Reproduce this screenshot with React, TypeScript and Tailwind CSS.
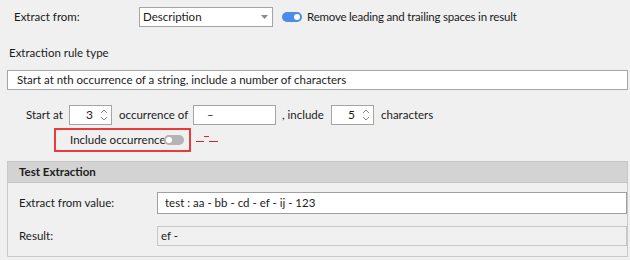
import React from 'react';

function Spin({ value }: { value: string }) {
  return (
    <div className="flex items-center shrink-0 h-[20px] w-[43px] border border-[#a5a5a5] bg-white">
      <span className="flex-1 text-right pr-[7px] text-[12px]">{value}</span>
      <svg width="8" height="14" viewBox="0 0 8 14" className="mr-[3px]">
        <path d="M1 5 L4 2 L7 5" fill="none" stroke="#8a8a8a" strokeWidth="1" />
        <path d="M1 9 L4 12 L7 9" fill="none" stroke="#8a8a8a" strokeWidth="1" />
      </svg>
    </div>
  );
}

function Toggle({ on }: { on: boolean }) {
  return (
    <div
      className={`relative shrink-0 w-[20px] h-[10px] rounded-full ${on ? 'bg-[#4d8ce6]' : 'bg-[#b4b4b4]'}`}
    >
      <div
        className={`absolute top-[2px] w-[6px] h-[6px] rounded-full bg-white ${on ? 'right-[2px]' : 'left-[2px]'}`}
      />
    </div>
  );
}

export default function App() {
  return (
    <div
      className="w-[630px] h-[260px] bg-[#f0f0f0] overflow-hidden text-[11.5px] text-[#1b1b1b] leading-[16px] whitespace-nowrap"
      style={{ fontFamily: 'Lato, "Liberation Sans", sans-serif' }}
    >
      <div className="flex items-center h-[20px] mt-[7px] pl-[14px]">
        <span className="w-[125px] shrink-0">Extract from:</span>
        <div className="flex items-center shrink-0 w-[134px] h-[20px] border border-[#a5a5a5] bg-white pl-[3px] pr-[4px]">
          <span className="flex-1">Description</span>
          <svg width="7" height="4" viewBox="0 0 7 4">
            <path d="M0 0 L7 0 L3.5 4 Z" fill="#8a8a8a" />
          </svg>
        </div>
        <div className="ml-[9px] mr-[5px]">
          <Toggle on />
        </div>
        <span className="tracking-[-0.2px]">Remove leading and trailing spaces in result</span>
      </div>

      <div className="mt-[18px] pl-[9px]">Extraction rule type</div>

      <div className="flex items-center h-[20px] mt-[9px] ml-[7px] mr-[2px] border border-[#a5a5a5] bg-white pl-[9px]">
        Start at nth occurrence of a string, include a number of characters
      </div>

      <div className="flex items-center h-[20px] mt-[15px] pl-[26px]">
        <span className="w-[43px] shrink-0">Start at</span>
        <Spin value="3" />
        <span className="ml-[7px] w-[74px] shrink-0">occurrence of</span>
        <div className="flex items-center shrink-0 w-[83px] h-[20px] border border-[#a5a5a5] bg-white pl-[13px]">–</div>
        <span className="ml-[6px] w-[49px] shrink-0">, include</span>
        <Spin value="5" />
        <span className="ml-[7px]">characters</span>
      </div>

      <div className="flex items-center mt-[3px] pl-[54px]">
        <div className="flex items-center shrink-0 w-[137px] h-[24px] border-2 border-[#ea3b3b] pl-[14px] overflow-hidden">
          <span className="w-[94px] shrink-0">Include occurrence</span>
          <Toggle on={false} />
        </div>
        <svg width="24" height="12" viewBox="0 0 24 12" className="ml-[5px]" shapeRendering="crispEdges">
          <path d="M0 7.5 H8" stroke="#e82020" strokeWidth="1" />
          <path d="M8 2.5 H13" stroke="#e82020" strokeWidth="1" />
          <path d="M13 7.5 H22" stroke="#e82020" strokeWidth="1" />
        </svg>
      </div>

      <div className="mt-[9px] ml-[7px] mr-[2px] border border-[#c8c8c8]">
        <div className="flex items-center h-[21px] bg-[#d3d3d3] border-b border-[#c4c4c4] pl-[11px] font-bold">
          Test Extraction
        </div>
        <div className="pt-[9px] pb-[10px]">
          <div className="flex items-center h-[22px]">
            <span className="w-[149px] shrink-0 pl-[11px]">Extract from value:</span>
            <div className="flex-1 flex items-center h-[22px] border border-[#a0a0a0] bg-white pl-[7px]">
              test : aa - bb - cd - ef - ij - 123
            </div>
          </div>
          <div className="flex items-center h-[20px] mt-[12px]">
            <span className="w-[149px] shrink-0 pl-[11px]">Result:</span>
            <div className="flex-1 flex items-center h-[20px] border border-[#c8c8c8] pl-[3px]">ef -</div>
          </div>
        </div>
      </div>
    </div>
  );
}
